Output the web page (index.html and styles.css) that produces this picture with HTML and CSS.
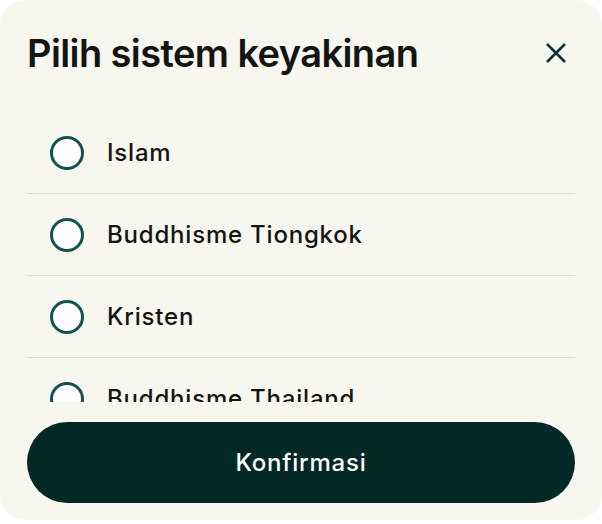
FILE: index.html
```html
<!DOCTYPE html>
<html lang="id">
<head>
  <meta charset="UTF-8">
  <title>Pilih sistem keyakinan</title>
  <link rel="stylesheet" href="styles.css">
</head>
<body>
  <div class="sheet">
    <div class="header">
      <h2>Pilih sistem keyakinan</h2>
      <button class="close" aria-label="Tutup">
        <svg width="22" height="22" viewBox="0 0 22 22"><path d="M2 2L20 20M20 2L2 20" stroke="#0b3532" stroke-width="2.6" fill="none"/></svg>
      </button>
    </div>

    <div class="list">
      <label class="row"><span class="radio"></span>Islam</label>
      <label class="row"><span class="radio"></span>Buddhisme Tiongkok</label>
      <label class="row"><span class="radio"></span>Kristen</label>
      <label class="row"><span class="radio"></span>Buddhisme Thailand</label>
    </div>

    <button class="confirm">Konfirmasi</button>
  </div>
</body>
</html>
```

FILE: styles.css
```css
body { margin: 0; background: #fff; font-family: Inter, "Noto Sans", sans-serif; color: #141512; }
.sheet { background: #f7f6ef; border-radius: 26px; height: 520px; padding: 0 27px; box-sizing: border-box; display: flex; flex-direction: column; }
.header { display: flex; justify-content: space-between; align-items: center; height: 46px; padding-top: 30px; }
h2 { margin: 0; font-size: 38px; font-weight: 600; letter-spacing: -0.6px; line-height: 46px; }
.close { background: none; border: none; padding: 0; margin-right: 8px; width: 22px; height: 22px; cursor: pointer; }
.list { margin-top: 36px; height: 290px; overflow: hidden; }
.row { display: flex; align-items: center; gap: 23px; height: 81px; padding-left: 23px; border-bottom: 1px solid #dcdcd3; font-size: 24px; font-weight: 500; letter-spacing: 0.8px; }
.radio { width: 28px; height: 28px; border: 3px solid #0f5450; border-radius: 50%; background: #fff; flex-shrink: 0; }
.confirm { margin-top: 20px; height: 81px; border: none; border-radius: 41px; background: #022926; color: #fff; font-family: inherit; font-size: 24px; font-weight: 500; line-height: 30px; letter-spacing: 0.8px; cursor: pointer; }
```
